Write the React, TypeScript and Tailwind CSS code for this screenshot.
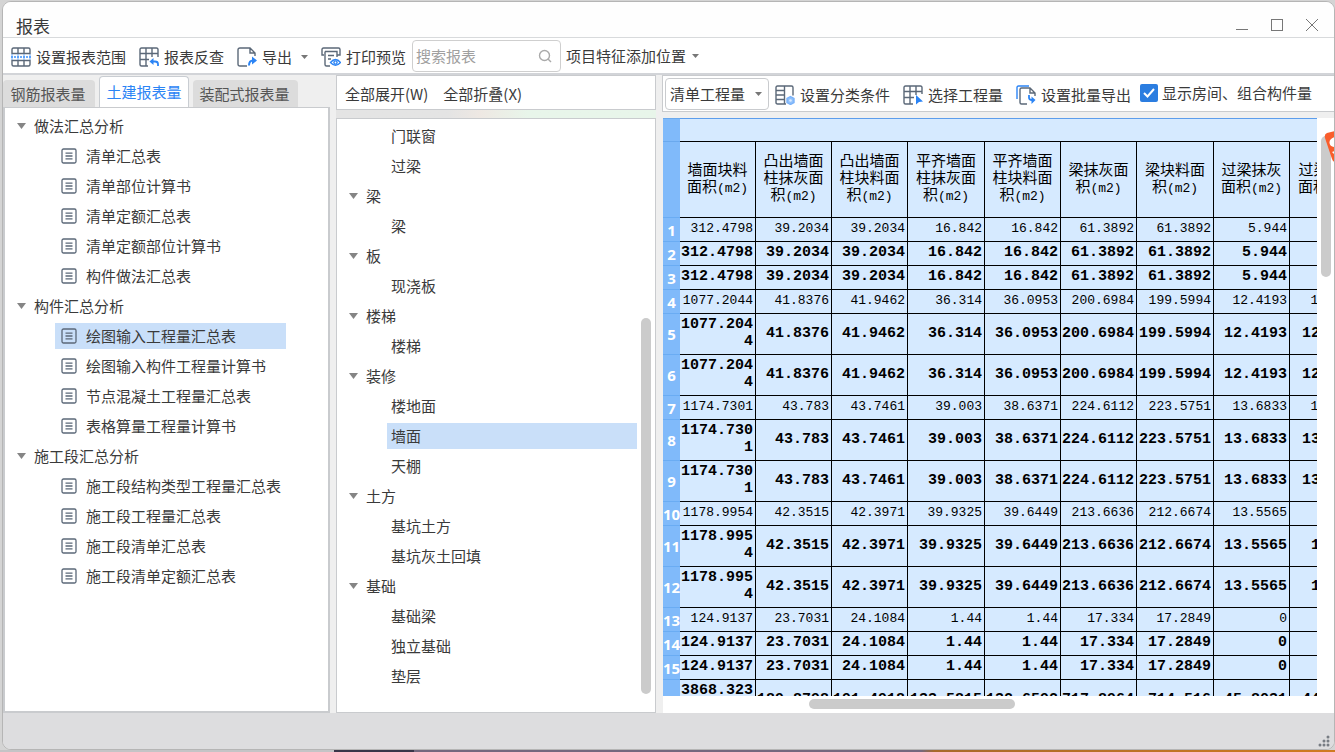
import React from "react";

type Children = { children: React.ReactNode };

const Svg = ({ children }: Children) => (
  <svg width="20" height="20" viewBox="0 0 20 20" fill="none" stroke="#5b6878" strokeWidth="1.4" className="shrink-0" aria-hidden="true">
    {children}
  </svg>
);

const RangeIcon = () => (
  <Svg>
    <path d="M1 6.500V2.500Q1 1 2.500 1H17.500Q19 1 19 2.500V6.500ZM7 1V6.500M13 1V6.500M1 13.500V17.500Q1 19 2.500 19H17.500Q19 19 19 17.500V13.500ZM7 13.500V19M13 13.500V19" />
    <path d="M0 10H20" stroke="#3c91fa" strokeDasharray="2 1" />
    <path d="M1 7.500V13M7 7.500V13M13 7.500V13M19 7.500V13" stroke="#3c91fa" strokeDasharray="1 1" />
  </Svg>
);

const LookupIcon = () => (
  <Svg>
    <path d="M19 10V2.500Q19 1 17.500 1H2.500Q1 1 1 2.500V17.500Q1 19 2.500 19H9M1 6.500H19M1 12.500H10M7 1V19M13 1V10" />
    <path d="M19 19V17Q19 14.500 16 14.500H12" stroke="#2b84f5" strokeWidth="1.8" />
    <path d="M14.500 11V18L10.500 14.500Z" fill="#2b84f5" stroke="none" />
  </Svg>
);

const ExportIcon = () => (
  <Svg>
    <path d="M10 19H3Q1 19 1 17V3Q1 1 3 1H13L18 6V9M13 1V6H18" />
    <path d="M12 18.500Q12 13.500 16 13.500" stroke="#2b84f5" strokeWidth="2" />
    <path d="M15 9.500L20 13.500L15 17.500Z" fill="#2b84f5" stroke="none" />
  </Svg>
);

const PreviewIcon = () => (
  <Svg>
    <path d="M3 8H1V2.500Q1 1 2.500 1H17.500Q19 1 19 2.500V8H16M4 4.500H16V10M4 4.500V17.500Q4 19 5.500 19H9M7 8.500H13M7 12H10" />
    <path d="M9.500 15.500Q14.500 9.500 19.500 15.500Q14.500 21 9.500 15.500Z" stroke="#2b84f5" fill="#fff" />
    <circle cx="14.500" cy="15.500" r="1.600" stroke="#2b84f5" />
  </Svg>
);

const ClassifyIcon = () => (
  <Svg>
    <path d="M11 19H2.500Q1 19 1 17.500V2.500Q1 1 2.500 1H16.500Q18 1 18 2.500V10.500M9.500 1V19M1 5.500H9.500M1 10H9.500M1 14.500H9.500" />
    <path d="M15.500 11.500L19 13.500V17.500L15.500 19.500L12 17.500V13.500Z" fill="#8fc0fb" stroke="#79b2fa" />
    <circle cx="15.500" cy="15.500" r="1.300" fill="#d9eaff" stroke="none" />
  </Svg>
);

const PickIcon = () => (
  <Svg>
    <path d="M19 9V2.500Q19 1 17.500 1H2.500Q1 1 1 2.500V17.500Q1 19 2.500 19H10M1 6.500H19M1 12.500H11M7 1V19M13 1V10" />
    <path d="M13 10L20 16.500L16 17L13 19.500Z" fill="#2b84f5" stroke="none" />
  </Svg>
);

const BatchIcon = () => (
  <Svg>
    <path d="M1 14V2.500Q1 1 2.500 1H13" stroke="#2b84f5" />
    <path d="M11 19H5.500Q4 19 4 17.500V4.500Q4 3 5.500 3H14L19 8V11M14 3V8H19" />
    <path d="M13 10V12.500Q13 15 16 15" stroke="#2b84f5" strokeWidth="1.8" />
    <path d="M15.500 11.500L19.500 15L15.500 19Z" fill="#2b84f5" stroke="none" />
  </Svg>
);

const SheetIcon = () => (
  <svg width="16" height="16" viewBox="0 0 16 16" fill="none" stroke="#5b6878" strokeWidth="1.3" className="shrink-0" aria-hidden="true">
    <rect x="1" y="1" width="14" height="14" rx="1.500" />
    <path d="M4.500 5.200H11.500M4.500 8H11.500M4.500 10.800H11.500" />
  </svg>
);

const Caret = () => (
  <svg width="7" height="4" viewBox="0 0 7 4" className="shrink-0" aria-hidden="true">
    <path d="M0 0H7L3.500 4Z" fill="#777" />
  </svg>
);

const TreeCaret = () => (
  <svg width="9" height="6" viewBox="0 0 9 6" className="shrink-0" aria-hidden="true">
    <path d="M0 0H9L4.500 6Z" fill="#858585" />
  </svg>
);

const ToolButton = ({ icon, children }: Children & { icon: React.ReactNode }) => (
  <button type="button" className="flex items-center gap-[5px] whitespace-nowrap">
    {icon}
    {children}
  </button>
);

type Group = { name: string; items: string[] };

const reports: Group[] = [
  { name: "做法汇总分析", items: ["清单汇总表", "清单部位计算书", "清单定额汇总表", "清单定额部位计算书", "构件做法汇总表"] },
  { name: "构件汇总分析", items: ["绘图输入工程量汇总表", "绘图输入构件工程量计算书", "节点混凝土工程量汇总表", "表格算量工程量计算书"] },
  { name: "施工段汇总分析", items: ["施工段结构类型工程量汇总表", "施工段工程量汇总表", "施工段清单汇总表", "施工段清单定额汇总表"] },
];

const components: Group[] = [
  { name: "", items: ["门联窗", "过梁"] },
  { name: "梁", items: ["梁"] },
  { name: "板", items: ["现浇板"] },
  { name: "楼梯", items: ["楼梯"] },
  { name: "装修", items: ["楼地面", "墙面", "天棚"] },
  { name: "土方", items: ["基坑土方", "基坑灰土回填"] },
  { name: "基础", items: ["基础梁", "独立基础", "垫层"] },
];

const Tree = ({ groups, selected, sheet }: { groups: Group[]; selected: string; sheet?: boolean }) => (
  <ul className={sheet ? "pt-[3px]" : "pt-0.5"}>
    {groups.map((g) => (
      <li key={g.name}>
        {g.name && (
          <button type="button" className="flex h-[30px] items-center gap-2 pl-3 whitespace-nowrap">
            <TreeCaret />
            {g.name}
          </button>
        )}
        <ul>
          {g.items.map((item) => (
            <li key={item} className={sheet ? "py-0.5 pr-[42px] pl-[50px]" : "py-0.5 pr-[18px] pl-[50px]"}>
              <button
                type="button"
                className={
                  (item === selected ? "bg-[#c9dff9] " : "") +
                  (sheet ? "gap-[9px] pl-[6px] " : "pl-1 ") +
                  "flex h-[26px] w-full items-center whitespace-nowrap"
                }
              >
                {sheet && <SheetIcon />}
                {item}
              </button>
            </li>
          ))}
        </ul>
      </li>
    ))}
  </ul>
);

const headers = [
  ["墙面块料", "面积(m2)"],
  ["凸出墙面", "柱抹灰面", "积(m2)"],
  ["凸出墙面", "柱块料面", "积(m2)"],
  ["平齐墙面", "柱抹灰面", "积(m2)"],
  ["平齐墙面", "柱块料面", "积(m2)"],
  ["梁抹灰面", "积(m2)"],
  ["梁块料面", "积(m2)"],
  ["过梁抹灰", "面积(m2)"],
  ["过梁块料", "面积(m2)"],
];

const v1 = ["312.4798", "39.2034", "39.2034", "16.842", "16.842", "61.3892", "61.3892", "5.944", "5.94"];
const v2 = ["1077.2044", "41.8376", "41.9462", "36.314", "36.0953", "200.6984", "199.5994", "12.4193", "12.4193"];
const v3 = ["1174.7301", "43.783", "43.7461", "39.003", "38.6371", "224.6112", "223.5751", "13.6833", "13.6833"];
const v4 = ["1178.9954", "42.3515", "42.3971", "39.9325", "39.6449", "213.6636", "212.6674", "13.5565", "13.556"];
const v5 = ["124.9137", "23.7031", "24.1084", "1.44", "1.44", "17.334", "17.2849", "0", "0"];
const v6 = ["3868.3234", "189.8798", "191.4918", "133.5815", "132.6592", "717.8964", "714.516", "45.8031", "44.8031"];

const rows = [v1, v2, v3, v4, v5].flatMap((values) => [
  { values, bold: false },
  { values, bold: true },
  { values, bold: true },
]);
rows.push({ values: v6, bold: true });

const Grid = () => (
  <table className="w-[705px] table-fixed border-separate border-spacing-0 bg-[#d6eaff] text-black">
    <colgroup>
      <col className="w-[17px]" />
      <col className="w-[76px]" />
      <col className="w-[76px]" />
      <col className="w-[76px]" />
      <col className="w-[77px]" />
      <col className="w-[76px]" />
      <col className="w-[76px]" />
      <col className="w-[77px]" />
      <col className="w-[76px]" />
      <col className="w-[78px]" />
    </colgroup>
    <thead>
      <tr className="h-6">
        <th className="border-t border-b border-[#6aa9ee] bg-[#80bafa] p-0" />
        <th colSpan={9} className="border-t border-b border-t-[#5c9dec] border-b-black p-0" />
      </tr>
      <tr className="h-[76px]">
        <th className="border-b border-[#6aacf3] bg-[#80bafa] p-0" />
        {headers.map((lines, i) => (
          <th key={i} scope="col" className="border-r border-b border-black p-0 font-['Liberation_Mono','Noto_Sans_CJK_SC',monospace] text-[15px] leading-[17px] font-normal">
            {lines.map((l) => (
              <span key={l} className="block whitespace-nowrap">
                {l.replace("(m2)", "")}
                {l.includes("(m2)") && <span className="text-[13px]">(m2)</span>}
              </span>
            ))}
          </th>
        ))}
      </tr>
    </thead>
    <tbody>
      {rows.map(({ values, bold }, r) => (
        <tr key={r} className={bold && values[0].length > 8 ? "h-[41px]" : "h-6"}>
          <th scope="row" className="border-b border-[#6aacf3] bg-[#80bafa] p-0 font-['Noto_Sans',sans-serif] text-[15px] leading-5 font-bold text-white">
            {r + 1}
          </th>
          {values.map((v, c) => (
            <td
              key={c}
              className={
                (bold ? "text-[15px] font-bold " : "text-[13px] ") +
                "border-r border-b border-black p-0 pr-0.5 pb-0.5 text-right font-['Liberation_Mono',monospace] leading-[17px] break-all"
              }
            >
              {v}
            </td>
          ))}
        </tr>
      ))}
    </tbody>
  </table>
);

export default function App() {
  return (
    <div className="h-screen overflow-hidden bg-[#d4d4d4] bg-[linear-gradient(to_right,#c4c4c6_0%,#c4c4c6_25%,#3a3548_25%,#3a3548_31%,#75687e_31%,#75687e_69%,#a8692a_70%,#d07a20_100%)] bg-[length:100%_2px] bg-bottom bg-no-repeat pt-px pb-0.5 pl-0.5 font-['Noto_Sans_CJK_SC',sans-serif] text-[15px] leading-5 text-[#3a3a3a]">
      <div className="relative flex h-full flex-col overflow-hidden rounded-[9px] border border-[#b5b5b5] bg-[#efefef]">
        <header className="flex h-[36px] shrink-0 items-end justify-between border-b border-[#d8dadc] bg-[#fefefe] pr-[15px] pl-[13px]">
          <h1 className="pb-px text-[17px] leading-5">报表</h1>
          <div className="flex gap-[21px] pb-[5px]">
            <button type="button" aria-label="最小化">
              <svg width="14" height="14" viewBox="0 0 14 14" stroke="#777"><path d="M1 11.500H13" /></svg>
            </button>
            <button type="button" aria-label="最大化">
              <svg width="14" height="14" viewBox="0 0 14 14" stroke="#777" fill="none"><rect x="1.500" y="1.500" width="11" height="11" /></svg>
            </button>
            <button type="button" aria-label="关闭">
              <svg width="14" height="14" viewBox="0 0 14 14" stroke="#777"><path d="M1 1L13 13M13 1L1 13" /></svg>
            </button>
          </div>
        </header>

        <div className="flex h-[37px] shrink-0 items-center border-b-2 border-[#d2d4d8] bg-white pl-2">
          <div className="flex items-center gap-[13px] pt-0.5">
            <ToolButton icon={<RangeIcon />}>设置报表范围</ToolButton>
            <ToolButton icon={<LookupIcon />}>报表反查</ToolButton>
            <ToolButton icon={<ExportIcon />}>
              导出
              <span className="pl-1"><Caret /></span>
            </ToolButton>
            <ToolButton icon={<PreviewIcon />}>打印预览</ToolButton>
          </div>
          <label className="ml-[6px] flex h-8 w-[149px] items-center rounded border border-[#cfcfcf] pr-2 pl-[3px]">
            <input aria-label="搜索报表" placeholder="搜索报表" className="w-full min-w-0 outline-none placeholder:text-[#a0a0a0]" />
            <svg width="14" height="14" viewBox="0 0 14 14" fill="none" stroke="#aaa" strokeWidth="1.4" className="shrink-0" aria-hidden="true">
              <circle cx="6.500" cy="6.500" r="5" />
              <path d="M10 10L13 13" />
            </svg>
          </label>
          <button type="button" className="ml-[5px] flex items-center gap-1.5 whitespace-nowrap">
            项目特征添加位置
            <Caret />
          </button>
        </div>

        <main className="flex min-h-0 flex-1">
          <section className="flex w-[327px] shrink-0 flex-col">
            <nav className="flex h-8 items-end gap-1 pt-px text-[#555]">
              <button type="button" className="h-[27px] w-[92px] rounded-t bg-[#dcdcdc] pr-0.5 whitespace-nowrap">钢筋报表量</button>
              <button type="button" className="h-[31px] w-[90px] rounded-t border border-b-0 border-[#c9cdd2] bg-white whitespace-nowrap text-[#2b84f5]">土建报表量</button>
              <button type="button" className="h-[27px] w-[105px] rounded-t bg-[#dcdcdc] pr-0.5 whitespace-nowrap">装配式报表量</button>
            </nav>
            <div className="flex-1 overflow-hidden border-2 border-t border-[#c9cbce] bg-white">
              <Tree groups={reports} selected="绘图输入工程量汇总表" sheet />
            </div>
          </section>

          <section className="ml-[6px] flex w-[320px] shrink-0 flex-col">
            <div className="flex h-[35px] shrink-0 items-center gap-[15px] border border-[#c9cbce] bg-white pt-0.5 pl-2">
              <button type="button">全部展开(W)</button>
              <button type="button">全部折叠(X)</button>
            </div>
            <div className="h-2 shrink-0 bg-linear-to-r from-[#e4e4e4] from-35% via-[#eee8e3] via-45% to-[#e8f5ea] to-60%" />
            <div className="flex min-h-0 flex-1 border border-[#c9cbce] bg-white">
              <div className="flex-1 overflow-hidden">
                <Tree groups={components} selected="墙面" />
              </div>
              <div className="-ml-[14px] flex w-[14px] flex-col justify-end pb-[18px]">
                <div className="h-[376px] w-2.5 rounded-full bg-[#cbcbcb]" />
              </div>
            </div>
          </section>

          <section className="ml-[6px] flex min-w-0 flex-1 flex-col">
            <div className="flex h-[37px] shrink-0 items-center border border-r-0 border-[#c9cbce] bg-white pl-0.5">
              <label className="relative flex h-8 w-[104px] items-center rounded border border-[#c9cbce]">
                <select aria-label="工程量类型" className="h-full w-full appearance-none pl-1 outline-none">
                  <option>清单工程量</option>
                </select>
                <span className="pointer-events-none absolute right-[6px]"><Caret /></span>
              </label>
              <div className="flex items-center gap-[13px] pt-0.5 pl-[6px]">
                <ToolButton icon={<ClassifyIcon />}>设置分类条件</ToolButton>
                <ToolButton icon={<PickIcon />}>选择工程量</ToolButton>
                <ToolButton icon={<BatchIcon />}>设置批量导出</ToolButton>
              </div>
              <label className="ml-[9px] flex items-center gap-1 pb-0.5 whitespace-nowrap">
                <input type="checkbox" defaultChecked className="peer sr-only" />
                <svg width="18" height="18" viewBox="0 0 18 18" fill="none" aria-hidden="true">
                  <rect width="18" height="18" rx="2" fill="#2b7de0" />
                  <path d="M4 9L7.500 12.500L14 5" stroke="#fff" strokeWidth="2" />
                </svg>
                显示房间、组合构件量
              </label>
            </div>
            <div className="mt-[6px] ml-px flex min-h-0 flex-1 flex-col bg-white">
              <div className="flex min-h-0 flex-1">
                <div className="min-w-0 flex-1 overflow-hidden">
                  <Grid />
                </div>
                <div className="w-[17px] shrink-0 pt-[18px] pl-1">
                  <div className="h-[141px] w-2.5 rounded-full bg-[#cbcbcb]" />
                </div>
              </div>
              <div className="h-[17px] shrink-0 pt-[3px] pl-[146px]">
                <div className="h-2.5 w-[206px] rounded-full bg-[#cbcbcb]" />
              </div>
            </div>
          </section>
        </main>

        <footer className="flex h-9 shrink-0 items-end justify-end bg-[#dddddf] pr-1 pb-0.5">
          <svg width="12" height="12" viewBox="0 0 12 12" fill="#777c83" aria-hidden="true">
            <circle cx="10" cy="2" r="1.500" />
            <circle cx="6" cy="6" r="1.500" />
            <circle cx="10" cy="6" r="1.500" />
            <circle cx="2" cy="10" r="1.500" />
            <circle cx="6" cy="10" r="1.500" />
            <circle cx="10" cy="10" r="1.500" />
          </svg>
        </footer>

        <svg width="11" height="32" viewBox="0 0 11 32" className="absolute top-[129px] -right-px" aria-hidden="true">
          <path d="M3 2L11 0V31Q9 31 8 28L1 7Q0 3 3 2Z" fill="#f95d2c" />
          <path d="M11 6Q5 8 5.500 12Q6 16 11 16Z" fill="#fff" />
          <path d="M8 21L11 20V24Z" fill="#fff" />
        </svg>
      </div>
    </div>
  );
}
